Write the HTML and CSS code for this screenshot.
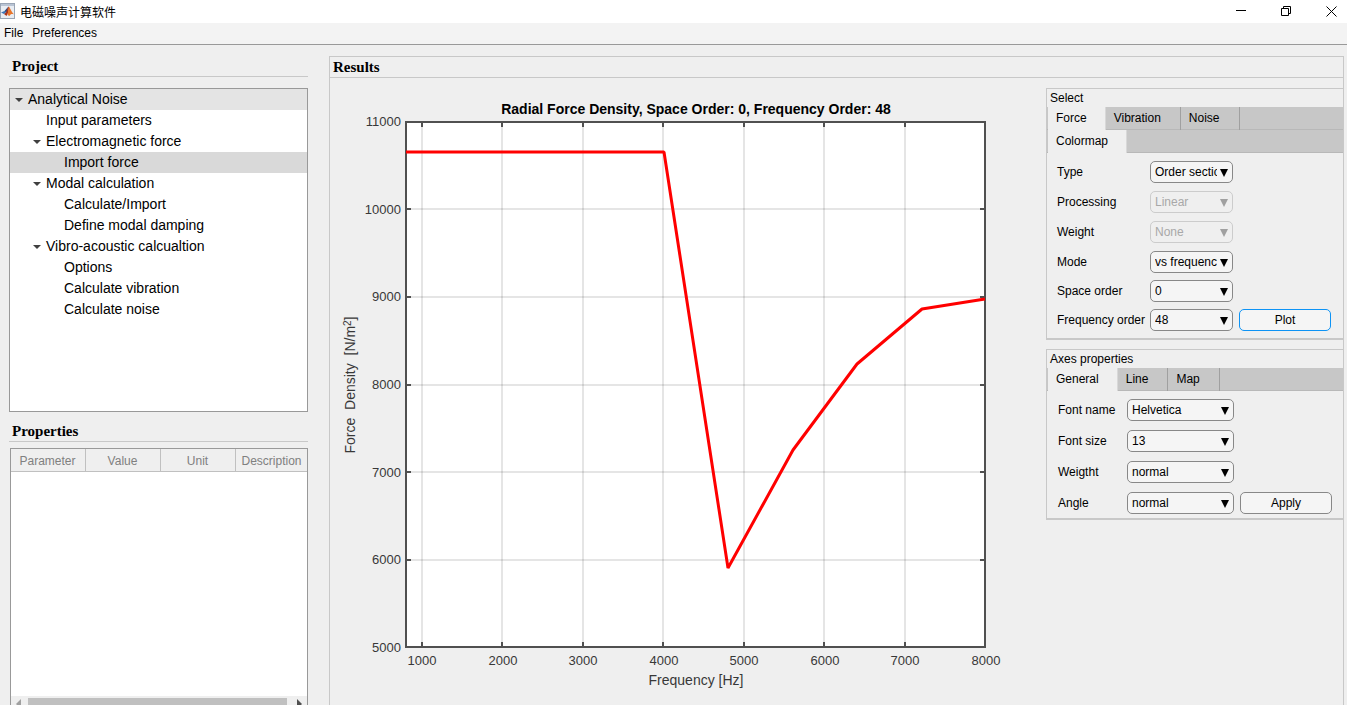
FILE: index.html
```html
<!doctype html>
<html lang="zh-CN">
  <head>
    <meta charset="UTF-8" />
    <meta name="viewport" content="width=device-width, initial-scale=1.0" />
    <title>电磁噪声计算软件</title>
    <link rel="stylesheet" href="styles.css">
  </head>
  <body>
    <header class="titlebar">
      <svg class="app-icon" viewBox="0 0 16 16" aria-hidden="true">
        <rect x="0.5" y="0.5" width="14" height="15" fill="#e9edf3" stroke="#9aa5b5" />
        <rect x="1" y="1" width="13" height="2" fill="#b9c4d4" />
        <path d="M1 9.5 L4.5 8 L6 9.5 L4 11 Z" fill="#3c76b8" />
        <path d="M4.5 8 L8 4 L7.5 8 L6 9.5 Z" fill="#274b86" />
        <path d="M4 11 L6 9.5 L8.2 4 L9 3.5 L8.5 9 L6.5 13 Z" fill="#a8321c" />
        <path d="M9 3.5 C10.5 6 11.5 9 14 11.5 C12 10.5 10.5 11 9.5 13 L7.5 12 Z" fill="#e8762b" />
      </svg>
      <h1 class="app-title">电磁噪声计算软件</h1>
      <div class="window-buttons">
        <button type="button" aria-label="Minimize">
          <svg viewBox="0 0 11 11"><path d="M0 4.5 H10" /></svg>
        </button>
        <button type="button" aria-label="Restore">
          <svg viewBox="0 0 11 11"><path d="M0.5 2.5 H7.5 V9.5 H0.5 Z M2.5 2.5 V0.5 H9.5 V7.5 H7.5" /></svg>
        </button>
        <button type="button" aria-label="Close">
          <svg viewBox="0 0 11 11"><path d="M0.5 0.5 L10.5 10.5 M10.5 0.5 L0.5 10.5" /></svg>
        </button>
      </div>
    </header>

    <nav class="menubar">
      <button type="button">File</button>
      <button type="button">Preferences</button>
    </nav>

    <main class="workspace">
      <aside class="sidebar">
        <h2 class="heading">Project</h2>
        <ul class="tree">
          <li><button type="button" class="tree-item open root">Analytical Noise</button></li>
          <li><button type="button" class="tree-item level-1">Input parameters</button></li>
          <li><button type="button" class="tree-item open level-1">Electromagnetic force</button></li>
          <li><button type="button" class="tree-item level-2 selected">Import force</button></li>
          <li><button type="button" class="tree-item open level-1">Modal calculation</button></li>
          <li><button type="button" class="tree-item level-2">Calculate/Import</button></li>
          <li><button type="button" class="tree-item level-2">Define modal damping</button></li>
          <li><button type="button" class="tree-item open level-1">Vibro-acoustic calcualtion</button></li>
          <li><button type="button" class="tree-item level-2">Options</button></li>
          <li><button type="button" class="tree-item level-2">Calculate vibration</button></li>
          <li><button type="button" class="tree-item level-2">Calculate noise</button></li>
        </ul>

        <h2 class="heading">Properties</h2>
        <div class="properties">
          <table>
            <thead>
              <tr>
                <th>Parameter</th>
                <th>Value</th>
                <th>Unit</th>
                <th>Description</th>
              </tr>
            </thead>
          </table>
          <div class="scrollbar">
            <svg viewBox="0 0 5 10"><path d="M5 0 V10 L0 5 Z" fill="#a0a0a0" /></svg>
            <div class="thumb"></div>
            <svg viewBox="0 0 5 10"><path d="M0 0 V10 L5 5 Z" fill="#505050" /></svg>
          </div>
        </div>
      </aside>

      <section class="results">
        <h2 class="heading">Results</h2>
        <div class="results-body">
          <svg class="chart" viewBox="0 0 716 627" role="img" aria-label="Radial Force Density">
            <rect x="76" y="44" width="579" height="525" fill="#fff" />
            <path class="grid" d="M92 44V569M172 44V569M253 44V569M333 44V569M414 44V569M494 44V569M575 44V569" />
            <path class="grid" d="M76 131H655M76 219H655M76 307H655M76 394H655M76 482H655" />
            <path class="axis" d="M76 44H655V569H76Z" />
            <path class="axis" d="M92 44v5M172 44v5M253 44v5M333 44v5M414 44v5M494 44v5M575 44v5" />
            <path class="axis" d="M92 569v-5M172 569v-5M253 569v-5M333 569v-5M414 569v-5M494 569v-5M575 569v-5" />
            <path class="axis" d="M76 131h5M76 219h5M76 307h5M76 394h5M76 482h5" />
            <path class="axis" d="M655 131h-5M655 219h-5M655 307h-5M655 394h-5M655 482h-5" />
            <polyline class="series" points="76,74 334,74 398,490 463,372 527,286 592,231 655,221" />

            <text class="chart-title" x="366" y="36">Radial Force Density, Space Order: 0, Frequency Order: 48</text>

            <g class="y-ticks">
              <text x="71" y="48">11000</text>
              <text x="71" y="136">10000</text>
              <text x="71" y="223">9000</text>
              <text x="71" y="311">8000</text>
              <text x="71" y="399">7000</text>
              <text x="71" y="486">6000</text>
              <text x="71" y="574">5000</text>
            </g>
            <g class="x-ticks">
              <text x="92" y="587">1000</text>
              <text x="173" y="587">2000</text>
              <text x="253" y="587">3000</text>
              <text x="334" y="587">4000</text>
              <text x="414" y="587">5000</text>
              <text x="495" y="587">6000</text>
              <text x="575" y="587">7000</text>
              <text x="656" y="587">8000</text>
            </g>
            <text class="axis-label" x="366" y="607">Frequency [Hz]</text>
            <text class="axis-label" transform="translate(25 307) rotate(-90)">Force  Density  [N/m<tspan class="sup" dy="-4">2</tspan><tspan dy="4">]</tspan></text>
          </svg>

          <div class="controls">
            <form class="panel">
              <h3>Select</h3>
              <div class="tabs">
                <button type="button" class="active">Force</button>
                <button type="button">Vibration</button>
                <button type="button">Noise</button>
              </div>
              <div class="tabs">
                <button type="button" class="active">Colormap</button>
              </div>
              <div class="fields plot-fields">
                <label for="type">Type</label>
                <span class="dropdown"><select id="type"><option>Order section</option></select></span>
                <label for="processing">Processing</label>
                <span class="dropdown disabled"><select id="processing" disabled><option>Linear</option></select></span>
                <label for="weight">Weight</label>
                <span class="dropdown disabled"><select id="weight" disabled><option>None</option></select></span>
                <label for="mode">Mode</label>
                <span class="dropdown"><select id="mode"><option>vs frequency</option></select></span>
              </div>
              <div class="fields order-fields">
                <label for="space-order">Space order</label>
                <span class="dropdown"><select id="space-order"><option>0</option></select></span>
                <label for="frequency-order">Frequency order</label>
                <span class="dropdown"><select id="frequency-order"><option>48</option></select></span>
                <button type="button" class="action primary">Plot</button>
              </div>
            </form>

            <form class="panel">
              <h3>Axes properties</h3>
              <div class="tabs">
                <button type="button" class="active">General</button>
                <button type="button">Line</button>
                <button type="button">Map</button>
              </div>
              <div class="fields axes-fields">
                <label for="font-name">Font name</label>
                <span class="dropdown"><select id="font-name"><option>Helvetica</option></select></span>
                <label for="font-size">Font size</label>
                <span class="dropdown"><select id="font-size"><option>13</option></select></span>
                <label for="font-weight">Weigtht</label>
                <span class="dropdown"><select id="font-weight"><option>normal</option></select></span>
                <label for="font-angle">Angle</label>
                <span class="dropdown"><select id="font-angle"><option>normal</option></select></span>
                <button type="button" class="action">Apply</button>
              </div>
            </form>
          </div>
        </div>
      </section>
    </main>
  </body>
</html>
```
FILE: styles.css
```css
* {
  box-sizing: border-box;
}
body {
  display: flex;
  flex-direction: column;
  height: 100vh;
  margin: 0;
  overflow: hidden;
  background-color: #efefef;
  color: #000;
  font-family: "Liberation Sans", Arial, "Noto Sans CJK SC", sans-serif;
  font-size: 12px;
}
button,
select {
  font: inherit;
  color: inherit;
}
button {
  padding: 0;
  border: none;
  background: none;
}

/* window frame */
.titlebar {
  display: flex;
  flex: none;
  align-items: center;
  height: 23px;
  padding: 0 10px 1px 0;
  background-color: #fff;
}
.app-icon {
  width: 16px;
  height: 16px;
}
.app-title {
  margin: 0 auto 0 4px;
  font-size: 12px;
  font-weight: normal;
}
.window-buttons {
  display: flex;
  gap: 34px;
}
.window-buttons svg {
  display: block;
  width: 11px;
  height: 11px;
  fill: none;
  stroke: #000;
}
.menubar {
  display: flex;
  flex: none;
  gap: 9px;
  height: 22px;
  padding: 0 4px 2px;
  border-bottom: 1px solid #999;
  background-color: #f3f3f3;
}

/* the lower edge runs past the window */
.workspace {
  display: grid;
  flex: 1;
  grid-template-columns: 299px 1fr;
  gap: 21px;
  min-height: 0;
  margin-bottom: -8px;
  padding: 11px 3px 0 9px;
}
.heading {
  margin: 0;
  padding-left: 3px;
  border-bottom: 1px solid #c8c8c8;
  font-family: "Liberation Serif", Cambria, serif;
  font-size: 15px;
  line-height: 20px;
}

/* left column */
.sidebar {
  display: flex;
  flex-direction: column;
  min-height: 0;
}
.tree {
  flex: none;
  height: 324px;
  margin: 11px 0 9px;
  padding: 0;
  border: 1px solid #999;
  background-color: #fff;
  list-style: none;
}
.tree-item {
  position: relative;
  display: block;
  width: 100%;
  padding-left: 18px;
  font-size: 14px;
  line-height: 21px;
  text-align: left;
}
.tree-item.level-1 {
  padding-left: 36px;
}
.tree-item.level-2 {
  padding-left: 54px;
}
.tree-item.root {
  background-color: #e4e4e4;
}
.tree-item.selected {
  background-color: #d9d9d9;
}
.tree-item.open::before {
  content: "";
  position: absolute;
  top: 9px;
  margin-left: -13px;
  border: 4px solid transparent;
  border-top-color: #404040;
  border-bottom: none;
}
.properties {
  display: flex;
  flex: 1;
  flex-direction: column;
  justify-content: space-between;
  margin: 6px 0 0 1px;
  border: 1px solid #999;
  background-color: #fff;
}
.properties table {
  width: 100%;
  border-collapse: separate;
  border-spacing: 0;
  table-layout: fixed;
}
.properties th {
  width: 75px;
  height: 23px;
  padding: 1px 1px 0 0;
  border-right: 1px solid #c0c0c0;
  border-bottom: 1px solid #c0c0c0;
  background-color: #efefef;
  color: #808080;
  font-weight: normal;
}
.properties th:last-child {
  width: auto;
  padding-right: 0;
  border-right: none;
}
.scrollbar {
  display: flex;
  gap: 7px;
  align-items: center;
  height: 16px;
  padding: 2px 5px;
  background-color: #efefef;
}
.scrollbar svg {
  width: 5px;
  height: 10px;
}
.scrollbar .thumb {
  flex: 1;
  height: 12px;
  margin-right: 3px;
  background-color: #c0c0c0;
}

/* results */
.results {
  border: 1px solid #c8c8c8;
  border-bottom: none;
}
.results-body {
  display: flex;
  align-items: flex-start;
}
.chart {
  flex: 1;
  min-width: 0;
}
.chart text {
  fill: #383838;
  font-size: 13px;
}
.chart .grid {
  stroke: #000;
  stroke-opacity: 0.1;
  stroke-width: 2;
}
.chart .axis {
  fill: none;
  stroke: #505050;
  stroke-width: 2;
}
.chart .series {
  fill: none;
  stroke: #f00;
  stroke-width: 3;
  stroke-linejoin: bevel;
}
.chart .chart-title {
  fill: #000;
  font-size: 14px;
  font-weight: bold;
  text-anchor: middle;
}
.chart .axis-label {
  font-size: 14px;
  text-anchor: middle;
  white-space: pre;
}
.chart .sup {
  font-size: 10px;
}
.y-ticks {
  text-anchor: end;
}
.x-ticks {
  text-anchor: middle;
}

/* right column */
.controls {
  display: flex;
  flex: none;
  flex-direction: column;
  gap: 9px;
  width: 297px;
  margin-top: 10px;
}
.panel {
  border: 1px solid #c8c8c8;
  border-width: 1px 0 2px 1px;
}
.panel h3 {
  margin: 0;
  padding-left: 3px;
  font-size: 12px;
  font-weight: normal;
  line-height: 18px;
}
.tabs {
  display: flex;
  height: 23px;
  padding-left: 1px;
  border-bottom: 1px solid #b8b8b8;
  background-color: #c7c7c7;
}
.tabs button {
  height: 23px;
  padding: 0 19px 1px 8px;
  border-right: 1px solid #a0a0a0;
}
.tabs .active {
  padding-right: 18px;
  border-right-color: #d8d8d8;
  background-color: #efefef;
}
.fields {
  display: grid;
  align-items: center;
  padding-left: 10px;
}
.plot-fields {
  grid-template-columns: 93px 83px;
  row-gap: 8px;
  padding-top: 8px;
}
.order-fields {
  grid-template-columns: 93px 83px 98px;
  row-gap: 7px;
  padding-top: 7px;
  padding-bottom: 7px;
}
.axes-fields {
  grid-template-columns: 69px 107px 98px;
  row-gap: 9px;
  padding: 8px 0 4px 11px;
}
.fields label {
  grid-column: 1;
  white-space: nowrap;
}
.dropdown {
  position: relative;
}
.dropdown::after {
  content: "";
  position: absolute;
  top: 8px;
  right: 5px;
  border: 4px solid transparent;
  border-top: 8px solid #000;
  border-bottom: none;
  pointer-events: none;
}
.dropdown select {
  display: block;
  width: 100%;
  height: 22px;
  padding: 0 15px 0 4px;
  border: 1px solid #888;
  border-radius: 5px;
  background-color: #f5f5f5;
  appearance: none;
}
.dropdown.disabled::after {
  border-top-color: #a0a0a0;
}
.dropdown.disabled select {
  border-color: #ccc;
  background-color: #efefef;
  color: #a8a8a8;
  opacity: 1;
}
.action {
  height: 22px;
  margin-left: 6px;
  border: 1px solid #888;
  border-radius: 5px;
  background-color: #f5f5f5;
}
.action.primary {
  border-color: #0d93f5;
}
```
